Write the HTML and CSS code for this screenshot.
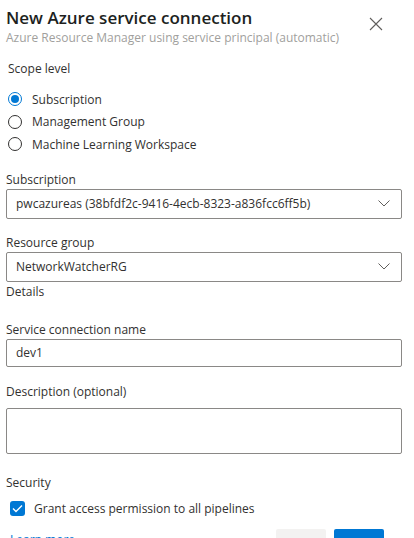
FILE: index.html
```html
<!DOCTYPE html>
<html>
<head>
<meta charset="utf-8">
<link rel="stylesheet" href="styles.css">
</head>
<body>
<div class="panel">
  <header class="head">
    <div class="titles">
      <h1 class="title">New Azure service connection</h1>
      <div class="subtitle">Azure Resource Manager using service principal (automatic)</div>
    </div>
    <span class="close"><svg width="14" height="14" viewBox="0 0 14 14"><path d="M1 1L13 13M13 1L1 13" stroke="#605e5c" stroke-width="1.1" fill="none"/></svg></span>
  </header>

  <div class="label scope">Scope level</div>
  <div class="radios">
    <div class="radio"><span class="circle on"></span><span>Subscription</span></div>
    <div class="radio"><span class="circle"></span><span>Management Group</span></div>
    <div class="radio"><span class="circle"></span><span>Machine Learning Workspace</span></div>
  </div>

  <div class="field first">
    <div class="label">Subscription</div>
    <div class="box select"><span>pwcazureas (38bfdf2c-9416-4ecb-8323-a836fcc6ff5b)</span><svg class="chev" width="12" height="7" viewBox="0 0 12 7"><path d="M0.5 0.5L6 6L11.5 0.5" stroke="#605e5c" stroke-width="1" fill="none"/></svg></div>
  </div>

  <div class="field rg">
    <div class="label">Resource group</div>
    <div class="box select"><span>NetworkWatcherRG</span><svg class="chev" width="12" height="7" viewBox="0 0 12 7"><path d="M0.5 0.5L6 6L11.5 0.5" stroke="#605e5c" stroke-width="1" fill="none"/></svg></div>
  </div>
  <div class="label details">Details</div>

  <div class="field name">
    <div class="label">Service connection name</div>
    <div class="box"><span>dev1</span></div>
  </div>

  <div class="field desc">
    <div class="label">Description (optional)</div>
    <div class="box area"></div>
  </div>

  <div class="label security">Security</div>
  <div class="check"><span class="cb"><svg width="11" height="9" viewBox="0 0 11 9"><path d="M1 4.5L4 7.5L10 1.5" stroke="#fff" stroke-width="1.4" fill="none"/></svg></span><span>Grant access permission to all pipelines</span></div>

  <div class="foot">
    <a class="link">Learn more</a>
    <div class="btns">
      <span class="btn gray"></span>
      <span class="btn blue"></span>
    </div>
  </div>
</div>
</body>
</html>
```

FILE: styles.css
```css
* { box-sizing: border-box; }
html, body { margin: 0; padding: 0; background: #fff; overflow: hidden; }
body { font-family: "Open Sans", "Noto Sans", sans-serif; color: #323130; height: 538px; }
.panel { padding: 0 12px 0 6px; }

.head { display: flex; justify-content: space-between; align-items: flex-start; padding-top: 6px; }
.title { margin: 0; font-size: 17px; line-height: 24px; font-weight: 600; color: #201f1e; }
.subtitle { font-size: 12px; line-height: 16px; color: #a19f9d; }
.close { margin: 11px 19px 0 0; display: flex; }

.label { font-size: 12px; line-height: 18px; color: #323130; }
.scope { margin-top: 14px; padding-left: 2px; }

.radios { margin-top: 10px; padding-left: 2px; }
.radio { display: flex; align-items: center; height: 22.5px; font-size: 12px; }
.circle { width: 14px; height: 14px; border: 1px solid #323130; border-radius: 50%; margin-right: 10px; display: flex; align-items: center; justify-content: center; }
.circle.on { border-color: #0078d4; }
.circle.on::after { content: ""; width: 8px; height: 8px; border-radius: 50%; background: #0078d4; }

.field.first { margin-top: 15px; }
.box { height: 30px; border: 1px solid #8a8886; border-radius: 2px; display: flex; align-items: center; padding: 0 9px; font-size: 12px; color: #323130; }
.select { justify-content: space-between; }
.chev { margin-right: 2px; }
.rg { margin-top: 15px; }
.details { margin-top: 1px; }
.name { margin-top: 20px; }
.name .box { height: 28px; }
.desc { margin-top: 16px; }
.desc .label { margin-bottom: 7px; }
.area { height: 46px; }
.security { margin-top: 20px; }

.check { display: flex; align-items: center; font-size: 12px; margin-top: 8px; padding-left: 4px; }
.cb { width: 15px; height: 15px; border-radius: 3px; background: #0078d4; display: flex; align-items: center; justify-content: center; margin-right: 9px; }

.foot { display: flex; justify-content: space-between; align-items: flex-start; margin-top: 12px; padding-left: 4px; }
.link { color: #0078d4; font-size: 12px; line-height: 16px; margin-top: 3px; }
.btns { display: flex; gap: 8px; margin-right: 18px; }
.btn { width: 50px; height: 32px; border-radius: 2px; }
.gray { background: #f3f2f1; }
.blue { background: #0078d4; }
```
